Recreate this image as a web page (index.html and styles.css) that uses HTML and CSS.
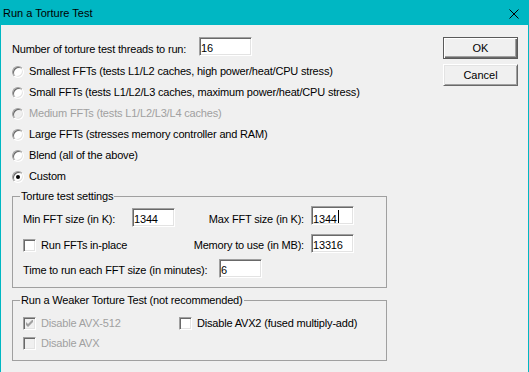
FILE: index.html
```html
<!DOCTYPE html>
<html>
<head>
<meta charset="utf-8">
<title>Run a Torture Test</title>
<link rel="stylesheet" href="styles.css">
</head>
<body>
<div class="window">
  <header class="titlebar">
    <span class="title">Run a Torture Test</span>
    <svg class="close" width="10" height="10" viewBox="0 0 10 10"><path d="M0.5 0.5L9.5 9.5M9.5 0.5L0.5 9.5" stroke="#000" stroke-width="1" fill="none"/></svg>
  </header>
  <div class="client">
    <div class="main">
      <div class="threads-row">
        <span class="threads-label">Number of torture test threads to run:</span>
        <div class="edit w53">16</div>
      </div>
      <ul class="options">
        <li class="opt"><span class="radio"></span><span>Smallest FFTs (tests L1/L2 caches, high power/heat/CPU stress)</span></li>
        <li class="opt"><span class="radio"></span><span>Small FFTs (tests L1/L2/L3 caches, maximum power/heat/CPU stress)</span></li>
        <li class="opt disabled"><span class="radio"></span><span>Medium FFTs (tests L1/L2/L3/L4 caches)</span></li>
        <li class="opt"><span class="radio"></span><span>Large FFTs (stresses memory controller and RAM)</span></li>
        <li class="opt"><span class="radio"></span><span>Blend (all of the above)</span></li>
        <li class="opt"><span class="radio checked"></span><span>Custom</span></li>
      </ul>
      <fieldset class="group settings">
        <legend>Torture test settings</legend>
        <div class="settings-body">
          <div class="srow">
            <span class="min-lbl">Min FFT size (in K):</span>
            <div class="edit w43">1344</div>
            <span class="right-lbl">Max FFT size (in K):</span>
            <div class="edit w43">1344<span class="caret"></span></div>
          </div>
          <div class="srow row2">
            <span class="cb cb-inline"></span>
            <span class="cb-lbl">Run FFTs in-place</span>
            <span class="right-lbl">Memory to use (in MB):</span>
            <div class="edit w43">13316</div>
          </div>
          <div class="srow row3">
            <span class="time-lbl">Time to run each FFT size (in minutes):</span>
            <div class="edit w43">6</div>
          </div>
        </div>
      </fieldset>
      <fieldset class="group weak">
        <legend>Run a Weaker Torture Test (not recommended)</legend>
        <div class="weak-body">
          <div class="crow">
            <div class="citem col1 disabled">
              <span class="cb"><svg width="7" height="7" viewBox="0 0 7 7"><polygon points="0,2 2,4 6,0 7,0 7,2 2,7 0,5" fill="#a0a0a0"/></svg></span>
              <span class="cb-lbl">Disable AVX-512</span>
            </div>
            <div class="citem">
              <span class="cb"></span>
              <span class="cb-lbl">Disable AVX2 (fused multiply-add)</span>
            </div>
          </div>
          <div class="crow">
            <div class="citem col1 disabled">
              <span class="cb"></span>
              <span class="cb-lbl">Disable AVX</span>
            </div>
          </div>
        </div>
      </fieldset>
    </div>
    <div class="buttons">
      <button class="btn btn-default">OK</button>
      <button class="btn btn-normal">Cancel</button>
    </div>
  </div>
</div>
</body>
</html>
```
FILE: styles.css
```css
* { box-sizing: border-box; }
html, body { margin: 0; padding: 0; }
body {
  width: 529px;
  height: 372px;
  overflow: hidden;
  background: #f0f0f0;
  font-family: "Liberation Sans", Arial, sans-serif;
  font-size: 11px;
  letter-spacing: -0.18px;
  color: #000;
}
.window {
  height: 372px;
  border-left: 1px solid #00b7c3;
  border-right: 1px solid #00b7c3;
  background: #f0f0f0;
  display: flex;
  flex-direction: column;
}
.titlebar {
  flex: none;
  height: 25px;
  background: #00b7c3;
  display: flex;
  align-items: center;
  justify-content: space-between;
  padding: 1px 9px 0 2px;
}
.title { font-size: 11px; letter-spacing: 0; line-height: 13px; }
.close { display: block; margin-top: 1px; }

.client {
  display: flex;
  justify-content: space-between;
  padding: 12px 10px 0 11px;
}
.main { width: 375px; display: flex; flex-direction: column; }
.buttons { width: 75px; display: flex; flex-direction: column; gap: 5px; }

.threads-row { display: flex; align-items: flex-start; height: 19px; }
.threads-label { width: 187px; line-height: 13px; padding-top: 6px; }

.edit {
  height: 19px;
  background: #fff;
  border: 1px solid;
  border-color: #a0a0a0 #fff #fff #a0a0a0;
  box-shadow: inset 1px 1px 0 #696969, inset -1px -1px 0 #e3e3e3;
  padding: 3px 0 0 1px;
  line-height: 14px;
  white-space: nowrap;
  flex: none;
}
.w53 { width: 53px; }
.w43 { width: 43px; }
.caret {
  display: inline-block;
  width: 1px;
  height: 13px;
  background: #000;
  margin-left: 1px;
}

.options { list-style: none; margin: 5px 0 0; padding: 0; }
.opt { height: 21px; display: flex; align-items: center; line-height: 13px; }
.radio {
  flex: none;
  width: 12px;
  height: 12px;
  border-radius: 50%;
  margin-right: 5px;
  background: #fff;
  border: 1px solid;
  border-color: #a0a0a0 #fff #fff #a0a0a0;
  box-shadow: inset 1px 1px 0 #696969, inset -1px -1px 0 #e3e3e3;
  display: flex;
  align-items: center;
  justify-content: center;
}
.radio.checked::after {
  content: "";
  width: 4px;
  height: 4px;
  border-radius: 50%;
  background: #000;
}
.disabled { color: #a0a0a0; }
.disabled .radio, .disabled .cb { background: #f0f0f0; }

.group {
  margin: 0;
  padding: 0;
  border: 1px solid #a0a0a0;
  min-width: 0;
}
.group legend {
  margin-left: 7px;
  padding: 0 1px;
  line-height: 14px;
}
.settings { margin-top: 2px; }
.weak { margin-top: 5px; }

.settings-body {
  display: flex;
  flex-direction: column;
  padding: 3px 32px 9px 10px;
}
.srow { display: flex; align-items: baseline; height: 19px; }
.row2 { margin-top: 9px; }
.row3 { margin-top: 6px; }
.min-lbl { width: 109px; }
.right-lbl { flex: 1; text-align: right; padding-right: 7px; }
.time-lbl { width: 196px; }

.cb {
  flex: none;
  width: 13px;
  height: 13px;
  background: #fff;
  border: 1px solid;
  border-color: #a0a0a0 #fff #fff #a0a0a0;
  box-shadow: inset 1px 1px 0 #696969, inset -1px -1px 0 #e3e3e3;
  display: flex;
  align-items: center;
  justify-content: center;
}
.cb svg { display: block; }
.cb-inline { align-self: flex-start; margin-top: 5px; }
.cb-lbl { margin-left: 5px; }

.weak-body {
  display: flex;
  flex-direction: column;
  gap: 4px;
  padding: 8px 10px 9px 10px;
}
.crow { display: flex; height: 16px; align-items: center; }
.citem { display: flex; align-items: center; }
.col1 { width: 156px; }

.btn {
  appearance: none;
  margin: 0;
  padding: 0;
  width: 75px;
  height: 22px;
  background: #f0f0f0;
  font: inherit;
  color: #000;
  display: flex;
  align-items: center;
  justify-content: center;
}
.btn-default {
  border: 1px solid #5a5a5a;
  box-shadow: inset 1px 1px 0 #fff, inset -1px -1px 0 #696969, inset -2px -2px 0 #a0a0a0;
}
.btn-normal {
  border: 1px solid;
  border-color: #fff #696969 #696969 #fff;
  box-shadow: inset 1px 1px 0 #e3e3e3, inset -1px -1px 0 #a0a0a0;
}
```
